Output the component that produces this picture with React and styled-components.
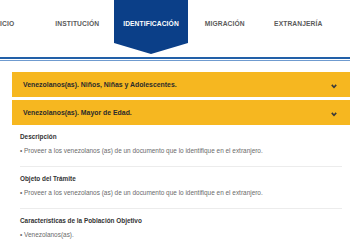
import React from "react";
import styled, { createGlobalStyle } from "styled-components";

const Global = createGlobalStyle`
  html, body { margin: 0; padding: 0; background: #fff; }
  body { font-family: "Liberation Sans", Arial, sans-serif; overflow: hidden; }
`;

const Page = styled.div`
  width: 350px;
  height: 250px;
  overflow: hidden;
`;

const Nav = styled.nav`
  display: flex;
  height: 57px;
  margin-left: -33px;
`;

const NavItem = styled.div`
  position: relative;
  flex: 0 0 ${(p) => p.$w || 73.5}px;
  height: 54px;
  display: flex;
  justify-content: center;
  align-items: flex-start;
  padding-top: 20px;
  box-sizing: border-box;
  font-size: 6.7px;
  line-height: 8px;
  font-weight: 700;
  letter-spacing: 0.1px;
  white-space: nowrap;
  color: ${(p) => (p.$active ? "#fff" : "#5a5a5a")};
  background: ${(p) => (p.$active ? "#0b3f88" : "transparent")};
  clip-path: ${(p) =>
    p.$active ? "polygon(0 0, 100% 0, 100% 43px, 50% 54px, 0 43px)" : "none"};
`;

const Rule = styled.div`
  height: 1px;
  border-top: 2px solid #2260a8;
  border-bottom: 1px solid #6f9bd0;
`;

const Content = styled.div`
  padding: 11px 0 0 12px;
`;

const Panels = styled.div`
  display: flex;
  flex-direction: column;
  gap: 3px;
`;

const Panel = styled.div`
  height: 25px;
  background: #f6b720;
  display: flex;
  align-items: center;
  justify-content: space-between;
  padding: 0 13px 0 11px;
  font-size: 6.9px;
  font-weight: 700;
  color: #2b2b2b;
`;

const Chevron = styled.svg`
  width: 6px;
  height: 5px;
  margin-top: 4px;
`;

const Body = styled.div`
  padding: 0 8px;
`;

const Section = styled.div`
  padding: 8px 0 11px;
  border-bottom: 1px solid ${(p) => (p.$last ? "transparent" : "#ececec")};
`;

const Heading = styled.div`
  font-size: 6.4px;
  line-height: 8px;
  font-weight: 700;
  color: #333;
  margin-bottom: 6px;
`;

const Bullet = styled.div`
  font-size: 6.45px;
  line-height: 8px;
  color: #6a6a6a;
`;

const Down = () => (
  <Chevron viewBox="0 0 6 5">
    <path d="M0.8 0.9 L3 3.3 L5.2 0.9" fill="none" stroke="#3a3a3a" strokeWidth="1.6" />
  </Chevron>
);

const sections = [
  {
    h: "Descripción",
    t: "• Proveer a los venezolanos (as) de un documento que lo identifique en el extranjero.",
  },
  {
    h: "Objeto del Trámite",
    t: "• Proveer a los venezolanos (as) de un documento que lo identifique en el extranjero.",
  },
  { h: "Características de la Población Objetivo", t: "• Venezolanos(as)." },
];

export default function App() {
  return (
    <Page>
      <Global />
      <Nav>
        <NavItem>INICIO</NavItem>
        <NavItem>INSTITUCIÓN</NavItem>
        <NavItem $active $w={74}>IDENTIFICACIÓN</NavItem>
        <NavItem>MIGRACIÓN</NavItem>
        <NavItem>EXTRANJERÍA</NavItem>
      </Nav>
      <Rule />
      <Content>
        <Panels>
          <Panel>
            <span>Venezolanos(as). Niños, Niñas y Adolescentes.</span>
            <Down />
          </Panel>
          <Panel>
            <span>Venezolanos(as). Mayor de Edad.</span>
            <Down />
          </Panel>
        </Panels>
        <Body>
          {sections.map((s, i) => (
            <Section key={i} $last={i === sections.length - 1}>
              <Heading>{s.h}</Heading>
              <Bullet>{s.t}</Bullet>
            </Section>
          ))}
        </Body>
      </Content>
    </Page>
  );
}
